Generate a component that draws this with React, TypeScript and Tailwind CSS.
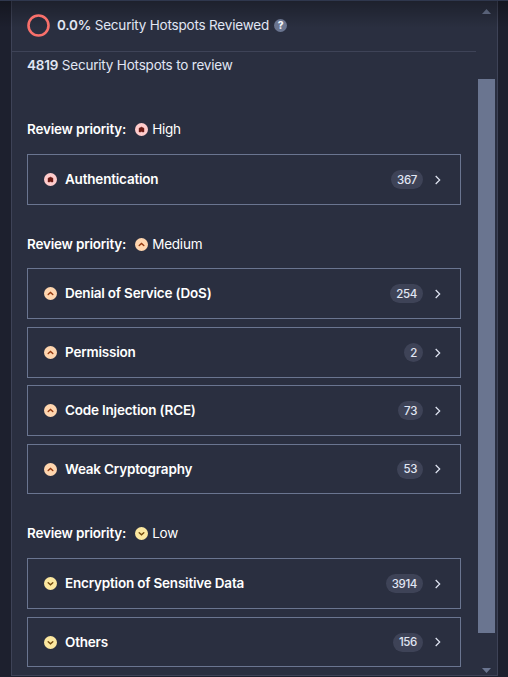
import React from "react";

type Level = "high" | "medium" | "low";

type Item = { name: string; count: number; box: string };
type Group = { level: Level; label: string; heading: string; items: Item[] };

const groups: Group[] = [
  {
    level: "high",
    label: "High",
    heading: "mt-[44px] mb-[15px]",
    items: [{ name: "Authentication", count: 367, box: "h-[51px]" }],
  },
  {
    level: "medium",
    label: "Medium",
    heading: "mt-[29px] mb-[14px]",
    items: [
      { name: "Denial of Service (DoS)", count: 254, box: "h-[51px]" },
      { name: "Permission", count: 2, box: "mt-2 h-[51px]" },
      { name: "Code Injection (RCE)", count: 73, box: "mt-[7px] h-[51px]" },
      { name: "Weak Cryptography", count: 53, box: "mt-2 h-[50px]" },
    ],
  },
  {
    level: "low",
    label: "Low",
    heading: "mt-[29px] mb-[15px]",
    items: [
      { name: "Encryption of Sensitive Data", count: 3914, box: "h-[51px]" },
      { name: "Others", count: 156, box: "mt-2 h-[50px]" },
    ],
  },
];

function PriorityIcon({ level }: { level: Level }) {
  const fill = { high: "#ffcccc", medium: "#ffd6af", low: "#fce8a0" }[level];
  return (
    <svg viewBox="0 0 13 13" className="h-[13px] w-[13px] shrink-0" fill="none">
      <circle cx="6.5" cy="6.5" r="6.5" fill={fill} />
      {level === "high" && <path d="M6.5 4 9 5.2V9H7.6L6.5 8.6 5.4 9H4V5.2Z" fill="#6b1a14" stroke="#6b1a14" strokeWidth=".4" />}
      {level === "medium" && <path d="m4.2 7.5 2.3-2L8.8 7.5" stroke="#93370d" strokeWidth="1.4" strokeLinecap="round" />}
      {level === "low" && <path d="m4.2 5.8 2.3 2 2.3-2" stroke="#70480c" strokeWidth="1.4" strokeLinecap="round" />}
    </svg>
  );
}

function HotspotRow({ item, level }: { item: Item; level: Level }) {
  return (
    <div className={`flex w-[434px] items-center border border-[#6a7590] pl-4 pr-[19px] ${item.box}`}>
      <PriorityIcon level={level} />
      <span className="-mt-px ml-[8px] flex-1 font-semibold text-white">{item.name}</span>
      <span className="flex h-[19px] items-center rounded-full bg-[#3e4357] px-[6px] text-[11.5px] font-medium tracking-[-0.35px] text-[#e1e6f3]">
        {item.count}
      </span>
      <svg viewBox="0 0 6 10" className="ml-3 h-[10px] w-[6px]" fill="none" stroke="#e1e6f3" strokeWidth="1.2">
        <path d="m.7 1 4 4-4 4" />
      </svg>
    </div>
  );
}

export default function App() {
  return (
    <div className="h-[677px] w-[508px] overflow-hidden bg-[#1d202e] pl-[11px] pr-[10px] font-['Inter',sans-serif] text-[13.5px] leading-[20px] tracking-[-0.2px] text-[#e1e6f3]">
      <div className="flex h-[676px] border-x border-b border-[#3e4357] bg-[#2a2f40]">
        <main className="w-[464px]">
          <header className="flex h-[52px] items-center border-b border-[#3e4357] pb-px pl-[15px]">
            <svg viewBox="0 0 23 23" className="relative z-10 h-[23px] w-[23px]" fill="none">
              <circle cx="11.5" cy="11.5" r="10" stroke="#f8706b" strokeWidth="2.6" />
            </svg>
            <span className="relative z-10 ml-[7px] whitespace-nowrap">
              <b className="font-semibold">0.0%</b> Security Hotspots Reviewed
            </span>
            <svg viewBox="0 0 13 13" className="relative z-10 ml-[5px] h-[13px] w-[13px]">
              <circle cx="6.5" cy="6.5" r="6.5" fill="#6a7590" />
              <text x="6.5" y="10" textAnchor="middle" fontSize="10" fontWeight="800" fill="#f5f6fa">?</text>
            </svg>
          </header>
          <div className="pl-[15px] pt-[3px]">
            <p><b className="font-semibold">4819</b> Security Hotspots to review</p>
            {groups.map((group) => (
              <section key={group.level}>
                <div className={`flex items-center ${group.heading}`}>
                  <span className="font-semibold text-white">Review priority:</span>
                  <span className="ml-[9px] mr-1"><PriorityIcon level={group.level} /></span>
                  <span className="text-white">{group.label}</span>
                </div>
                {group.items.map((item) => <HotspotRow key={item.name} item={item} level={group.level} />)}
              </section>
            ))}
          </div>
        </main>
        <aside className="ml-[2px] flex w-[17px] flex-col items-center">
          <svg viewBox="0 0 9 5" className="mt-[9px] h-[5px] w-[9px] shrink-0"><path d="M4.5 0 9 5H0Z" fill="#6a7590" /></svg>
          <div className="mt-[65px] h-[554px] w-[17px] shrink-0 bg-[#6a7590]" />
          <svg viewBox="0 0 9 5" className="mt-[35px] h-[5px] w-[9px] shrink-0"><path d="M0 0H9L4.5 5Z" fill="#6a7590" /></svg>
        </aside>
      </div>
      <div className="absolute left-0 top-0 h-7 w-[508px] border-t border-[#2f374d] bg-gradient-to-b from-black/30 to-transparent" />
    </div>
  );
}
